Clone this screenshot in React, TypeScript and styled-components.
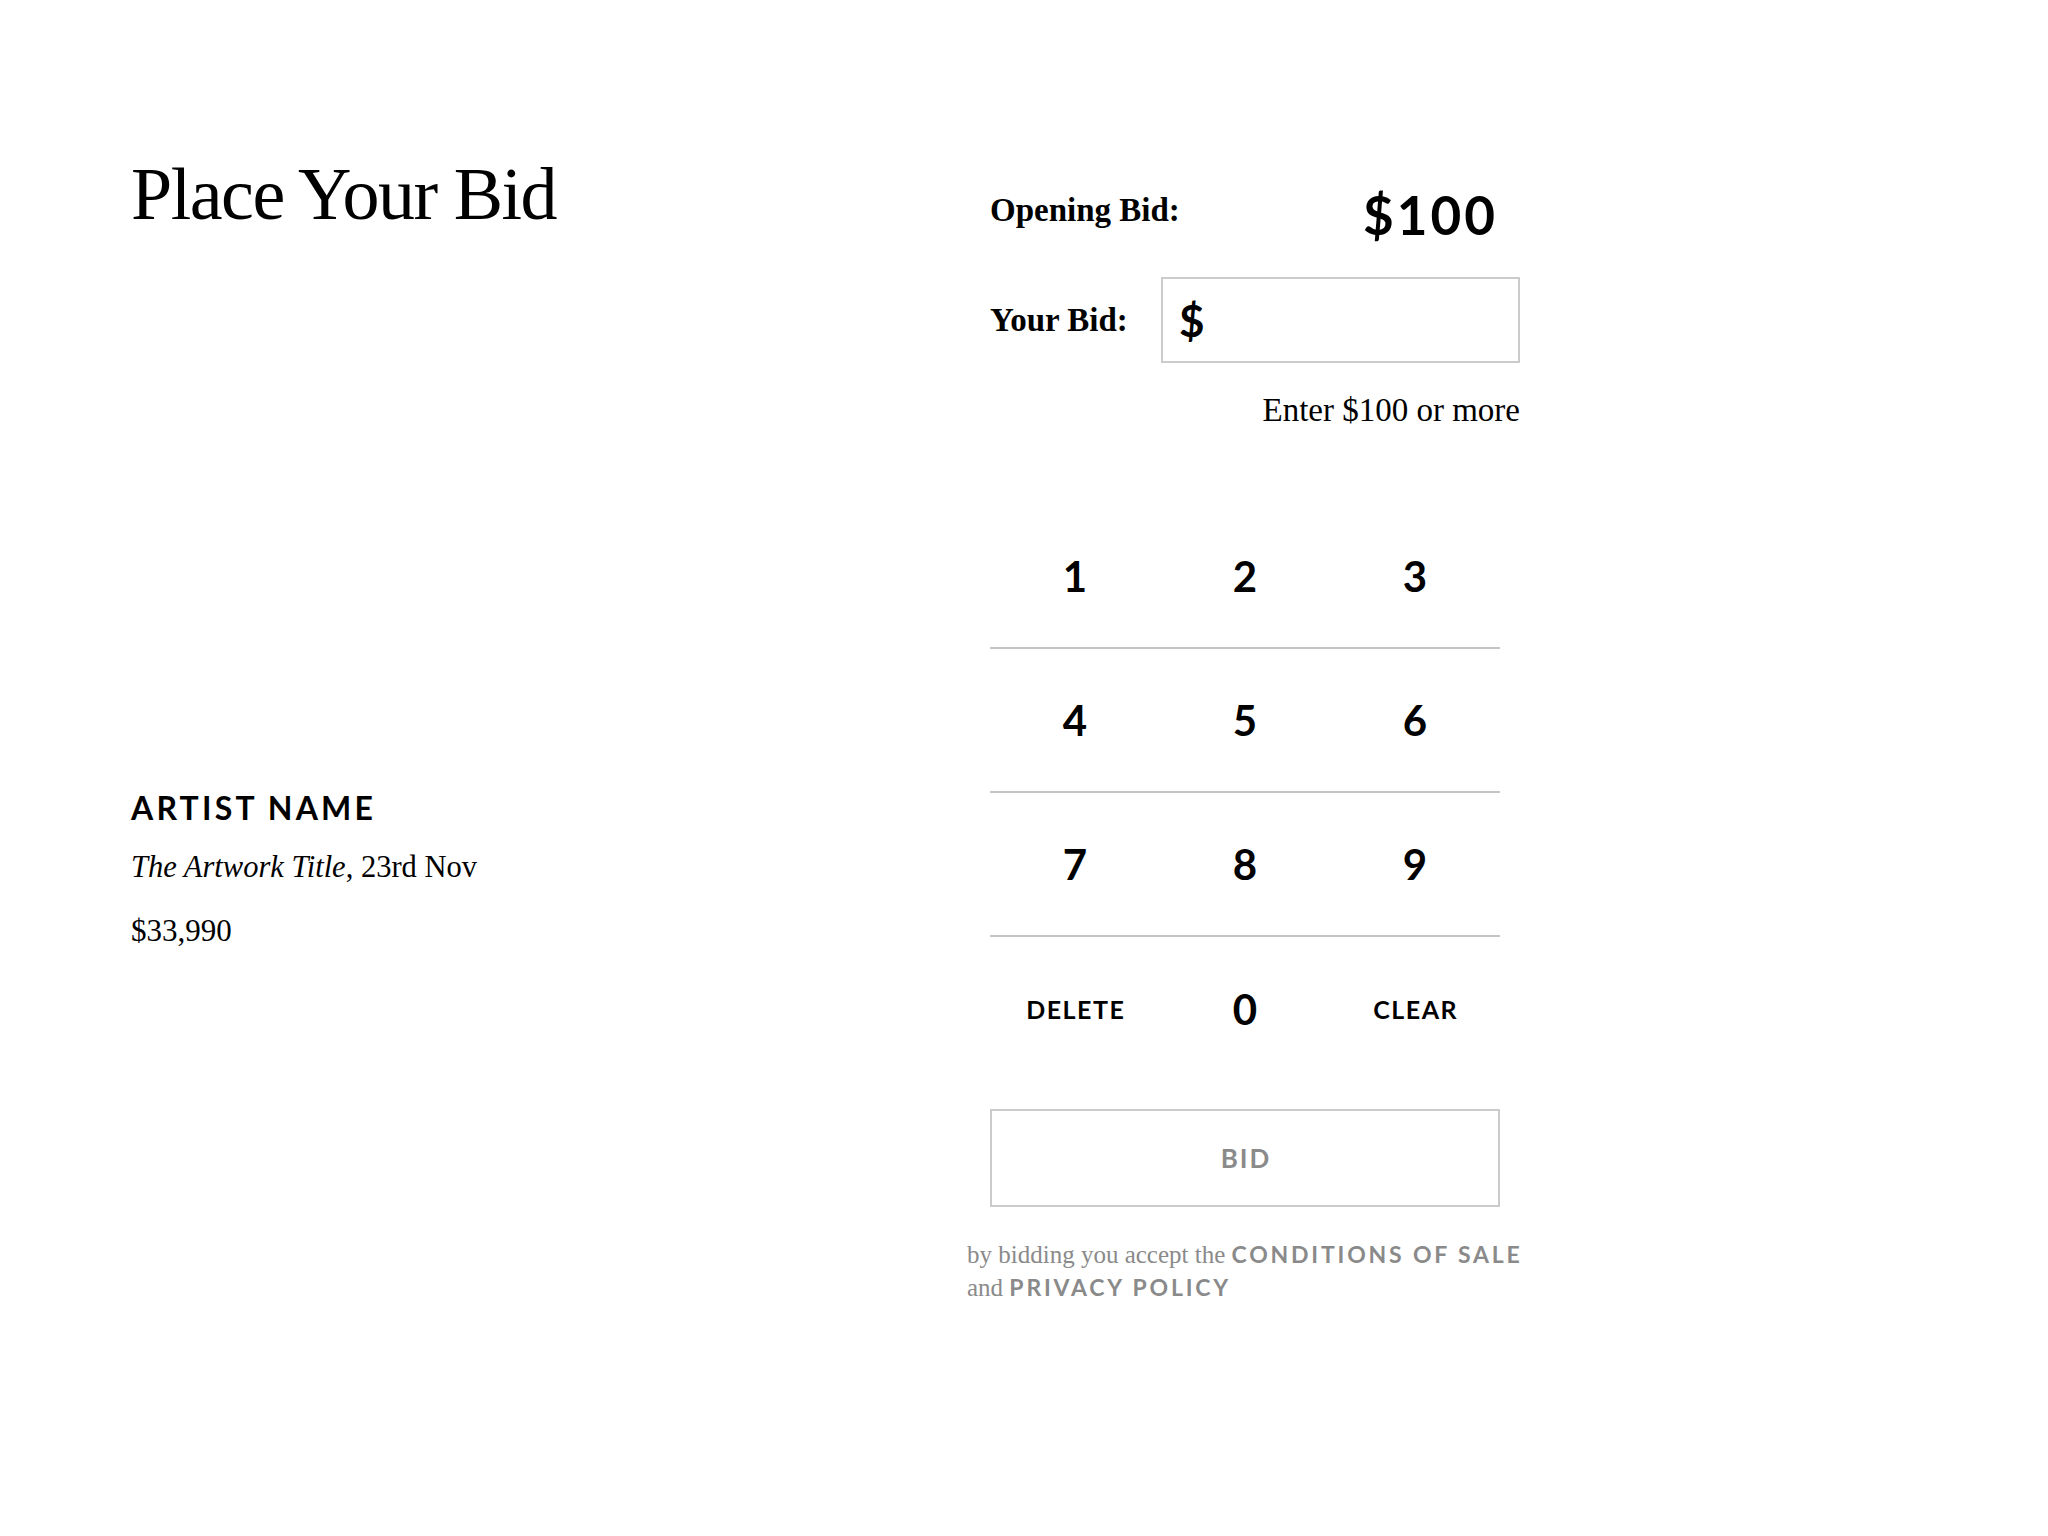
import React from 'react';
import styled, { createGlobalStyle } from 'styled-components';

const GlobalStyle = createGlobalStyle`
  html, body {
    margin: 0;
    padding: 0;
    background: #fff;
  }
  body {
    font-family: 'Liberation Serif', 'Times New Roman', serif;
    color: #000;
  }
  * {
    box-sizing: border-box;
  }
`;

const Page = styled.main`
  display: grid;
  grid-template-columns: 859px 530px;
  padding: 150px 0 0 131px;
  min-height: 1536px;
`;

const LeftColumn = styled.section`
  display: flex;
  flex-direction: column;
`;

const Title = styled.h1`
  margin: 7px 0 0;
  font-family: 'Liberation Serif', serif;
  font-weight: 400;
  font-size: 74px;
  line-height: 1;
  letter-spacing: -1.5px;
`;

const ArtworkInfo = styled.div`
  margin-top: 561px;
  display: flex;
  flex-direction: column;
`;

const ArtistName = styled.h2`
  margin: 0;
  font-family: Lato, 'Liberation Sans', sans-serif;
  font-weight: 700;
  font-size: 32px;
  line-height: 1;
  letter-spacing: 3.2px;
`;

const ArtworkLine = styled.p`
  margin: 28px 0 0;
  font-size: 30.5px;
  line-height: 1;

  em {
    font-style: italic;
  }
`;

const Price = styled.p`
  margin: 32px 0 0;
  font-size: 31px;
  line-height: 1;
`;

const RightColumn = styled.section`
  display: flex;
  flex-direction: column;
  width: 530px;
`;

const OpeningRow = styled.div`
  margin-top: 25px;
  height: 70px;
  padding-right: 22px;
  display: flex;
  align-items: center;
  justify-content: space-between;
`;

const YourBidRow = styled.div`
  margin-top: 32px;
  display: grid;
  grid-template-columns: 171px minmax(0, 1fr);
  align-items: center;
`;

const Label = styled.span`
  font-family: 'Liberation Serif', serif;
  font-weight: 700;
  font-size: 33px;
  line-height: 1;
`;

const Amount = styled.span`
  padding-top: 8px;
  font-family: Lato, 'Liberation Sans', sans-serif;
  font-weight: 700;
  font-size: 53px;
  line-height: 1;
  letter-spacing: 3px;
`;

const BidInput = styled.label`
  height: 86px;
  border: 2px solid #cbcbcb;
  padding-left: 16px;
  display: flex;
  align-items: center;
  font-family: Lato, 'Liberation Sans', sans-serif;
  font-weight: 700;
  font-size: 44px;
`;

const Field = styled.input`
  flex: 1;
  width: 0;
  min-width: 0;
  border: none;
  outline: none;
  background: transparent;
  font: inherit;
  padding: 0 0 0 6px;
`;

const Hint = styled.p`
  margin: 31px 0 0;
  text-align: right;
  font-size: 33px;
  line-height: 1;
`;

const Keypad = styled.div`
  margin-top: 78px;
  width: 510px;
  display: grid;
  grid-template-columns: repeat(3, 170px);
`;

const Key = styled.button<{ $bottom?: boolean; $word?: boolean }>`
  height: 144px;
  padding: 0 0 0 ${(p) => (p.$word ? '1.5px' : '0')};
  border: none;
  border-bottom: ${(p) => (p.$bottom ? 'none' : '2px solid #c4c4c4')};
  background: none;
  display: flex;
  align-items: center;
  justify-content: center;
  color: #000;
  font-family: Lato, 'Liberation Sans', sans-serif;
  font-weight: 700;
  font-size: ${(p) => (p.$word ? '25px' : '42px')};
  letter-spacing: ${(p) => (p.$word ? '1.5px' : '0')};
  cursor: pointer;
`;

const BidButton = styled.button`
  margin-top: 28px;
  width: 510px;
  height: 98px;
  border: 2px solid #cbcbcb;
  background: #fff;
  color: #8a8a8a;
  font-family: Lato, 'Liberation Sans', sans-serif;
  font-weight: 700;
  font-size: 26px;
  letter-spacing: 2px;
  padding: 0 0 0 2px;
`;

const Terms = styled.p`
  margin: 31px 0 0 -23px;
  font-size: 25px;
  line-height: 32px;
  color: #8a8a8a;
  white-space: nowrap;
`;

const TermsLink = styled.a`
  font-family: Lato, 'Liberation Sans', sans-serif;
  font-weight: 700;
  font-size: 23px;
  letter-spacing: 2.8px;
  color: #8a8a8a;
  text-decoration: none;
`;

const keys = ['1', '2', '3', '4', '5', '6', '7', '8', '9'];

export default function App() {
  const [bid, setBid] = React.useState('');

  return (
    <>
      <GlobalStyle />
      <Page>
        <LeftColumn>
          <Title>Place Your Bid</Title>
          <ArtworkInfo>
            <ArtistName>ARTIST NAME</ArtistName>
            <ArtworkLine>
              <em>The Artwork Title</em>, 23rd Nov
            </ArtworkLine>
            <Price>$33,990</Price>
          </ArtworkInfo>
        </LeftColumn>

        <RightColumn>
          <OpeningRow>
            <Label>Opening Bid:</Label>
            <Amount>$100</Amount>
          </OpeningRow>
          <YourBidRow>
            <Label>Your Bid:</Label>
            <BidInput>
              $
              <Field value={bid} onChange={(e) => setBid(e.target.value.replace(/\D/g, ''))} />
            </BidInput>
          </YourBidRow>
          <Hint>Enter $100 or more</Hint>

          <Keypad>
            {keys.map((k) => (
              <Key key={k} onClick={() => setBid(bid + k)}>
                {k}
              </Key>
            ))}
            <Key $bottom $word onClick={() => setBid(bid.slice(0, -1))}>
              DELETE
            </Key>
            <Key $bottom onClick={() => setBid(bid + '0')}>
              0
            </Key>
            <Key $bottom $word onClick={() => setBid('')}>
              CLEAR
            </Key>
          </Keypad>

          <BidButton>BID</BidButton>

          <Terms>
            by bidding you accept the <TermsLink href="#">CONDITIONS OF SALE</TermsLink>
            <br />
            and <TermsLink href="#">PRIVACY POLICY</TermsLink>
          </Terms>
        </RightColumn>
      </Page>
    </>
  );
}
